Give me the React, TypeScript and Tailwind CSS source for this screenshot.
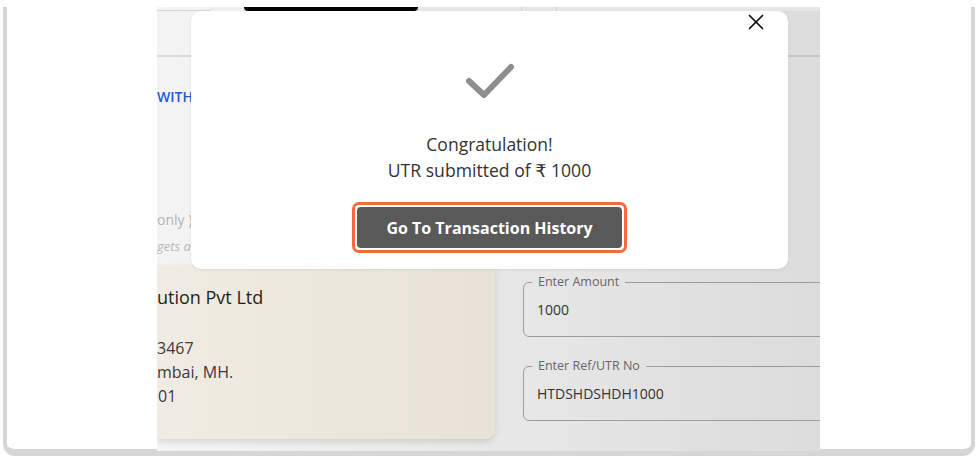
import { X } from "lucide-react"

function CheckMark() {
  return (
    <svg width="52" height="38" viewBox="0 0 52 38" fill="none">
      <polyline
        points="5,19 20,33 47,5"
        stroke="#8e8e8e"
        strokeWidth="6"
        strokeLinecap="round"
        strokeLinejoin="round"
      />
    </svg>
  )
}

function OutlinedField({ label, value }: { label: string; value: string }) {
  return (
    <fieldset className="w-[330px] h-[63px] rounded-[6px] border border-[#9c9c9c] pl-[13px]">
      <legend className="ml-[-5px] px-[6px] text-[12.5px] leading-[16px] text-[#666]">{label}</legend>
      <div className="mt-[10px] text-[14px] leading-[19px] text-[#333]">{value}</div>
    </fieldset>
  )
}

export default function App() {
  return (
    <div className="w-[978px] h-[466px] bg-white pt-[13px] pl-[3px] overflow-hidden" style={{ fontFamily: '"Open Sans", "DejaVu Sans", sans-serif' }}>
      <div className="w-[972px] h-[449px] border-l-4 border-r-4 border-b-[7px] border-[#d6d6d6] rounded-b-[12px]">
        {/* screenshot with modal */}
        <div className="relative ml-[150px] -mt-[6px] w-[663px] h-[444px] overflow-hidden bg-gradient-to-r from-[#f4f4f4] to-[#dcdcdc]">
          {/* tabs strip */}
          <div className="flex h-[4px]">
            <div className="w-[55px] border-b border-[#d4d4d4] rounded-br-[6px]" />
            <div className="w-[32px] bg-[#efefef]" />
            <div className="w-[174px] bg-black rounded-b-[4px]" />
            <div className="flex-1 flex bg-[#e6e6e6]">
              <div className="w-[103px]" />
              <div className="w-px bg-[#cfcfcf]" />
              <div className="w-[34px]" />
              <div className="w-px bg-[#cfcfcf]" />
            </div>
          </div>
          <div className="h-[46px] border-b-2 border-black/10" />

          <div className="mt-[30px] text-[14px] leading-[20px] font-semibold text-[#2157d8]">WITH</div>
          <div className="mt-[103px] text-[14px] leading-[20px] text-[#b3b3b3]">only )</div>
          <div className="mt-[7px] text-[13px] leading-[18px] italic text-[#b8b8b8]">gets a</div>

          <div className="mt-[10px] flex items-start">
            <div className="w-[338px] h-[174px] shrink-0 rounded-br-[10px] bg-gradient-to-r from-[#f1ece3] to-[#e8e2d8] shadow-[0_3px_6px_rgba(0,0,0,0.12)] pt-[19px]">
              <div className="text-[18px] leading-[26px] font-medium text-[#1f1f1f]">ution Pvt Ltd</div>
              <div className="mt-[26px] text-[16px] leading-[24px] text-[#3a3a3a]">
                <div>3467</div>
                <div>mbai, MH.</div>
                <div className="ml-[1px]">01</div>
              </div>
            </div>
            <div className="ml-[28px] mt-[9px] flex flex-col gap-[21px]">
              <OutlinedField label="Enter Amount" value="1000" />
              <OutlinedField label="Enter Ref/UTR No" value="HTDSHDSHDH1000" />
            </div>
          </div>

          {/* modal */}
          <div className="absolute left-[34px] top-[4px] w-[597px] h-[258px] bg-white rounded-[10px] shadow-[0_1px_3px_rgba(0,0,0,0.08)] flex flex-col items-center">
            <button className="absolute top-[-2px] right-[19px] text-[#111]">
              <X size={26} strokeWidth={1.6} />
            </button>
            <div className="mt-[51px]">
              <CheckMark />
            </div>
            <div className="mt-[31px] text-[17.5px] leading-[26px] text-[#333]">Congratulation!</div>
            <div className="text-[17.6px] leading-[26px] text-[#333]">UTR submitted of ₹ 1000</div>
            <div className="mt-[19px] rounded-[7px] border-[3px] border-[#f26b3b] p-[2px]">
              <div className="w-[265px] h-[41px] rounded-[4px] bg-[#595959] flex items-center justify-center text-[16px] font-bold text-white">
                Go To Transaction History
              </div>
            </div>
          </div>
        </div>
      </div>
    </div>
  )
}
